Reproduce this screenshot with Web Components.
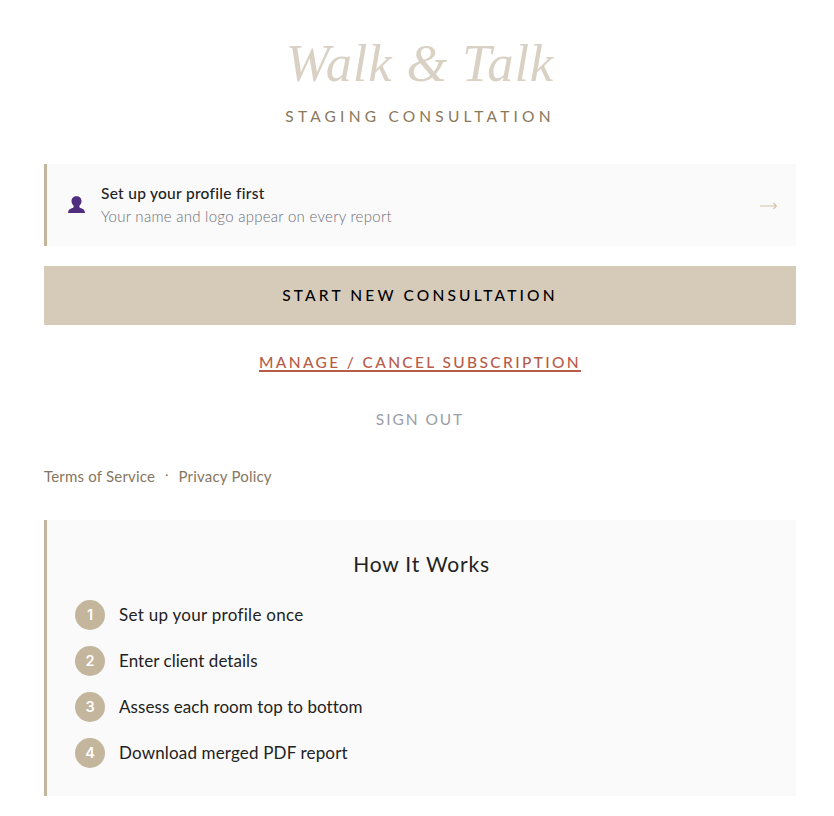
<!DOCTYPE html>
<html lang="en"><head><meta charset="utf-8"><title>Walk & Talk</title>
<style>
html,body{margin:0;background:#fff}
body{font-family:Lato,"Liberation Sans",sans-serif;color:#222}
</style></head><body>
<app-page>
  <brand-header title-text="Walk &amp; Talk" sub="STAGING CONSULTATION"></brand-header>
  <profile-card heading="Set up your profile first" sub="Your name and logo appear on every report"></profile-card>
  <primary-button>START NEW CONSULTATION</primary-button>
  <text-link kind="manage">MANAGE / CANCEL SUBSCRIPTION</text-link>
  <text-link kind="signout">SIGN OUT</text-link>
  <legal-links></legal-links>
  <how-card heading="How It Works">
    <how-step n="1" track=".29">Set up your profile once</how-step>
    <how-step n="2" track=".05">Enter client details</how-step>
    <how-step n="3" track=".07">Assess each room top to bottom</how-step>
    <how-step n="4" track=".16">Download merged PDF report</how-step>
  </how-card>
</app-page>
<script>
function def(name, html){
  customElements.define(name, class extends HTMLElement{
    connectedCallback(){
      if(this.shadowRoot) return;
      const r=this.attachShadow({mode:'open'});
      r.innerHTML=typeof html==='function'?html(this):html;
    }
  });
}
const esc=s=>String(s||'').replace(/&/g,'&amp;').replace(/</g,'&lt;');
def('app-page',`<style>:host{display:flex;flex-direction:column;box-sizing:border-box;width:834px;height:816px;padding:0 38px 0 44px;overflow:hidden}::slotted(*){flex:none}</style><slot></slot>`);
def('brand-header',e=>`<style>
:host{display:block;text-align:center;height:164px;box-sizing:border-box;padding-top:31px}
h1{margin:0;font:italic 400 52.5px/64px "Liberation Serif",serif;color:#d9d1c3;letter-spacing:.85px}
p{margin:11px 0 0;font:400 15.5px/20px Lato,sans-serif;letter-spacing:4.2px;color:#8a785a}
</style><h1>${esc(e.getAttribute('title-text'))}</h1><p>${esc(e.getAttribute('sub'))}</p>`);
def('profile-card',e=>`<style>
:host{display:flex;align-items:center;box-sizing:border-box;height:82px;background:#fafafa;border-left:3px solid #c4b59d;padding:0 19px 0 20px;gap:15px}
svg.u{width:19px;height:20px;flex:none}
.t{flex:1;min-width:0;padding-top:2px}
b{display:block;font:500 15.5px/22px Lato,sans-serif;color:#222;letter-spacing:.28px;margin-top:-2px}
span{display:block;font:300 15px/24px Lato,sans-serif;color:#6e6e78;letter-spacing:.27px}
svg.a{width:17px;height:12px;flex:none;margin-top:2px}
</style>
<svg class="u" viewBox="0 0 18 20"><path fill="#4f2d7f" d="M9 1.200c3.200 0 5 2.100 5 4.900 0 2-.9 3.600-2.100 4.600v1.300c0 .7 1.500 1.100 2.900 1.700 1.400.6 2.400 1.400 2.700 4.300H.5c.3-2.900 1.300-3.700 2.700-4.300 1.400-.6 2.900-1 2.900-1.700v-1.300C4.900 9.700 4 8.100 4 6.100 4 3.300 5.800 1.200 9 1.200z"/></svg>
<div class="t"><b>${esc(e.getAttribute('heading'))}</b><span>${esc(e.getAttribute('sub'))}</span></div>
<svg class="a" viewBox="0 0 17 12"><path d="M0 6H16.500M13.500 3 16.500 6l-3 3" fill="none" stroke="#d4c2a6" stroke-width="1.100"/></svg>`);
def('primary-button',`<style>
:host{display:flex;align-items:center;justify-content:center;box-sizing:border-box;height:59px;padding-bottom:2px;margin-top:20px;background:#d6cbb9;color:#000;font:500 15.500px/20px Lato,sans-serif;letter-spacing:3.15px}
</style><slot></slot>`);
def('text-link',e=>{const m=e.getAttribute('kind')==='manage';return `<style>
:host{display:block;text-align:center;height:20px;margin-top:${m?'27px':'37px'};font:${m?'500':'400'} 15.500px/20px Lato,sans-serif;letter-spacing:${m?'2.36px':'1.95px'};color:${m?'#b85c4a':'#9b9ea8'};${m?'text-decoration:underline;text-decoration-thickness:1.5px;text-underline-offset:2px':''}}
</style><slot></slot>`});
def('legal-links',`<style>
:host{display:flex;align-items:center;margin-top:37px;height:20px;font:400 15px/20px Lato,sans-serif;letter-spacing:.2px;color:#857661}
i{font-style:normal;font-size:12px;position:relative;top:-1px;margin:0 10px}
</style><span>Terms of Service</span><i>·</i><span>Privacy Policy</span>`);
def('how-card',e=>`<style>
:host{display:block;box-sizing:border-box;height:276px;margin-top:34px;background:#fafafa;border-left:3px solid #c4b59d;padding:28px 28px 0}
h2{margin:0 0 20px;text-align:center;font:400 21px/32px Lato,sans-serif;letter-spacing:.8px;color:#222}
.l{display:flex;flex-direction:column;gap:16px}
</style><h2>${esc(e.getAttribute('heading'))}</h2><div class="l"><slot></slot></div>`);
def('how-step',e=>`<style>
:host{display:flex;align-items:center;gap:14px;height:30px;font:400 17px/24px Lato,sans-serif;color:#222;letter-spacing:${esc(e.getAttribute('track'))}px}
.n{width:30px;height:30px;border-radius:50%;background:#c4b59d;color:#fff;display:flex;align-items:center;justify-content:center;font:600 14.500px/1 Inter,sans-serif;letter-spacing:0;flex:none}
</style><span class="n">${esc(e.getAttribute('n'))}</span><span><slot></slot></span>`);
</script>
</body></html>
